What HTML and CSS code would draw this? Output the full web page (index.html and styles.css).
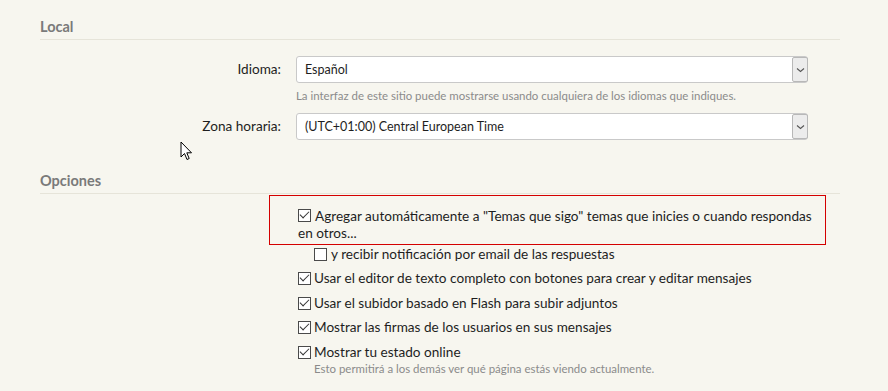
FILE: index.html
```html
<!DOCTYPE html>
<html lang="es">
<head>
<meta charset="utf-8">
<link rel="stylesheet" href="styles.css">
</head>
<body>
<div class="page">
  <h2 class="section">Local</h2>
  <div class="row">
    <label class="label">Idioma:</label>
    <div class="field">
      <div class="select"><span class="value">Español</span><span class="arrow"><svg width="9" height="6" viewBox="0 0 9 6"><path d="M1 1.5 L4.5 4.5 L8 1.5" fill="none" stroke="#555" stroke-width="1.1"/></svg></span></div>
      <div class="hint">La interfaz de este sitio puede mostrarse usando cualquiera de los idiomas que indiques.</div>
    </div>
  </div>
  <div class="row row2">
    <label class="label">Zona horaria:</label>
    <div class="field">
      <div class="select"><span class="value">(UTC+01:00) Central European Time</span><span class="arrow"><svg width="9" height="6" viewBox="0 0 9 6"><path d="M1 1.5 L4.5 4.5 L8 1.5" fill="none" stroke="#555" stroke-width="1.1"/></svg></span></div>
    </div>
  </div>

  <h2 class="section sec2">Opciones</h2>
  <div class="options">
    <div class="highlight">
      <div class="check"><span class="box on"></span><span>Agregar automáticamente a "Temas que sigo" temas que inicies o cuando respondas en otros...</span></div>
    </div>
    <div class="check sub"><span class="box"></span><span>y recibir notificación por email de las respuestas</span></div>
    <div class="check opt first"><span class="box on"></span><span>Usar el editor de texto completo con botones para crear y editar mensajes</span></div>
    <div class="check opt"><span class="box on"></span><span>Usar el subidor basado en Flash para subir adjuntos</span></div>
    <div class="check opt"><span class="box on"></span><span>Mostrar las firmas de los usuarios en sus mensajes</span></div>
    <div class="check opt"><span class="box on"></span><span>Mostrar tu estado online</span></div>
    <div class="hint hint2">Esto permitirá a los demás ver qué página estás viendo actualmente.</div>
  </div>
</div>
<svg class="cursor" width="14" height="21" viewBox="0 0 14 21"><path d="M1 1 L1 16 L4.5 12.5 L7 18.5 L9.2 17.5 L6.8 11.8 L11.5 11.8 Z" fill="#fff" stroke="#000" stroke-width="1"/></svg>
</body>
</html>
```
FILE: styles.css
```css
html, body { margin: 0; padding: 0; }
body {
  background: #f7f6ef;
  font-family: Lato, "Open Sans", sans-serif;
  font-size: 13.6px;
  color: #1e1e1e;
  width: 888px;
  height: 391px;
  overflow: hidden;
  position: relative;
}
.page {
  width: 800px;
  margin-left: 40px;
  padding-top: 18px;
}
.section {
  margin: 0;
  font-size: 14.5px;
  font-weight: bold;
  color: #7a7a7a;
  line-height: 18px;
  padding-bottom: 3px;
  border-bottom: 1px solid #e6e4d9;
}
.sec2 { margin-top: 32px; }
.row {
  display: grid;
  grid-template-columns: 241px 512px;
  column-gap: 15px;
  margin-top: 16px;
}
.row2 { margin-top: 10px; }
.label {
  text-align: right;
  line-height: 27px;
  font-size: 13.6px;
}
.select {
  height: 25px;
  border: 1px solid #c9c9c9;
  border-radius: 3px;
  background: #fff;
  display: flex;
  align-items: center;
  justify-content: space-between;
  font-size: 12.5px;
}
.value { padding-left: 8px; }
.arrow {
  width: 16px;
  height: 25px;
  margin-right: -1px;
  background: #ececec;
  border: 1px solid #b8b8b8;
  border-radius: 2px;
  display: flex;
  align-items: center;
  justify-content: center;
  box-sizing: border-box;
}
.hint {
  font-size: 11.45px;
  color: #8b8b8b;
  margin-top: 6px;
  line-height: 14px;
}
.options {
  margin-left: 229px;
  margin-top: 1px;
}
.highlight {
  border: 1px solid #d40000;
  padding: 11px 0 2px 28px;
  box-sizing: border-box;
  width: 557px;
}
.check {
  display: flex;
  align-items: flex-start;
  line-height: 17px;
}
.highlight .check { width: 515px; display: block; }
.box {
  display: inline-block;
  width: 11px;
  height: 11px;
  border: 1px solid #4a4a4a;
  background: #fff;
  margin: 2px 3px 0 0;
  vertical-align: -1px;
  position: relative;
  flex: none;
}
.highlight .box { margin-right: 4px; }
.box.on::after {
  content: "";
  position: absolute;
  left: 1px;
  top: 1px;
  width: 8px;
  height: 4px;
  border-left: 1.2px solid #333;
  border-bottom: 1.2px solid #333;
  transform: rotate(-45deg);
  transform-origin: center;
}
.sub { margin-left: 45px; margin-top: 1px; }
.sub .box { margin-right: 4px; }
.opt { margin-left: 29px; margin-top: 7.7px; }
.opt.first { margin-top: 7px; }
.hint2 { margin-left: 45px; margin-top: 1px; }
.cursor {
  position: absolute;
  left: 180px;
  top: 141px;
}
```
